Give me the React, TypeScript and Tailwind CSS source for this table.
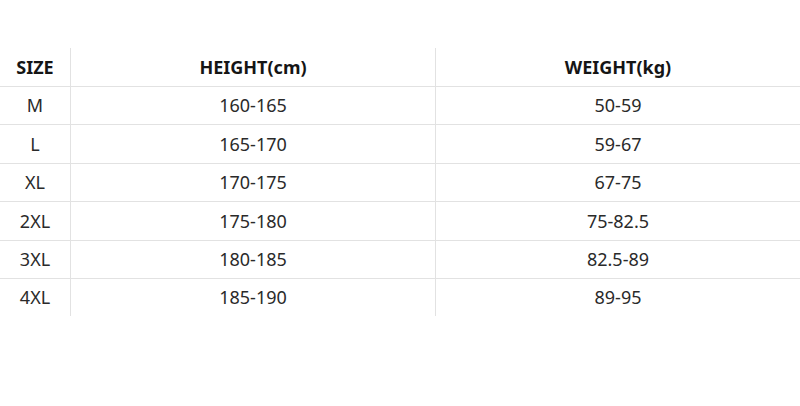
import React from "react";

const rows: { s: string; h: string; w: string; cls: string }[] = [
  { s: "M", h: "160-165", w: "50-59", cls: "h-[37px]" },
  { s: "L", h: "165-170", w: "59-67", cls: "h-[38px]" },
  { s: "XL", h: "170-175", w: "67-75", cls: "h-[37px]" },
  { s: "2XL", h: "175-180", w: "75-82.5", cls: "h-[38px]" },
  { s: "3XL", h: "180-185", w: "82.5-89", cls: "h-[37px]" },
  { s: "4XL", h: "185-190", w: "89-95", cls: "h-[37px]" },
];

export default function App() {
  return (
    <div
      className="w-[800px] h-[406px] bg-white overflow-hidden pt-[48px]"
      style={{ fontFamily: '"Noto Sans", "Open Sans", sans-serif' }}
    >
      <div className="grid grid-cols-[71px_365px_1fr] h-[38px] text-[18px] font-bold text-[#151515]">
        <div className="flex items-center justify-center border-r border-[#e2e2e2]">SIZE</div>
        <div className="flex items-center justify-center border-r border-[#e2e2e2]">HEIGHT(cm)</div>
        <div className="flex items-center justify-center">WEIGHT(kg)</div>
      </div>
      {rows.map((r) => (
        <div key={r.s}>
          <div className="h-px bg-[#e2e2e2]" />
          <div className={`grid grid-cols-[71px_365px_1fr] ${r.cls} text-[18px] text-[#2a2a2a]`}>
            <div className="flex items-center justify-center border-r border-[#e2e2e2]">{r.s}</div>
            <div className="flex items-center justify-center border-r border-[#e2e2e2]">{r.h}</div>
            <div className="flex items-center justify-center">{r.w}</div>
          </div>
        </div>
      ))}
    </div>
  );
}
